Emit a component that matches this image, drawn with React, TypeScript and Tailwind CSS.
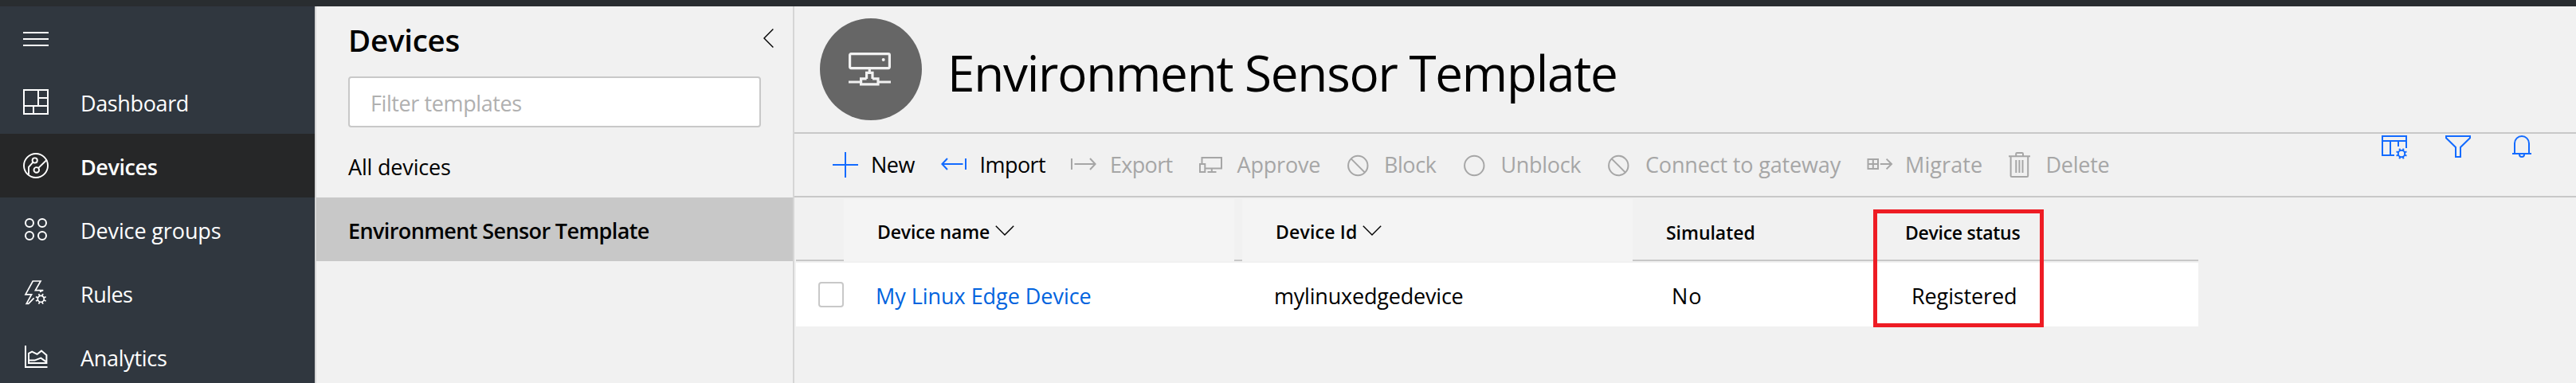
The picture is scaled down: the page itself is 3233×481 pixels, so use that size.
import type { ReactNode, SVGProps } from "react";

type IconProps = { w?: number; h?: number; children: ReactNode } & SVGProps<SVGSVGElement>;

function Icon({ w = 32, h = 32, children, ...rest }: IconProps) {
  return (
    <svg
      width={w}
      height={h}
      viewBox={`0 0 ${w} ${h}`}
      fill="none"
      stroke="currentColor"
      strokeWidth={2}
      className="block shrink-0 overflow-visible"
      {...rest}
    >
      {children}
    </svg>
  );
}

function Gear({ cx, cy, r, outer }: { cx: number; cy: number; r: number; outer: number }) {
  return (
    <g transform={`translate(${cx} ${cy})`}>
      <circle r={r} />
      {[22.5, 67.5, 112.5, 157.5, 202.5, 247.5, 292.5, 337.5].map((a) => (
        <path key={a} d={`M${r} 0H${outer}`} transform={`rotate(${a})`} />
      ))}
    </g>
  );
}

const HamburgerIcon = () => (
  <Icon>
    <path d="M0 9H32M0 17H32M0 25H32" />
  </Icon>
);

const DashboardIcon = () => (
  <Icon>
    <path d="M1 1H31V31H1ZM19 1V21M1 21H31M19 11H31M13 21V31" />
  </Icon>
);

const DevicesIcon = () => (
  <Icon strokeWidth={1.9}>
    <circle cx="16" cy="16" r="15" />
    <circle cx="14.7" cy="9.5" r="3.1" />
    <path d="M12.3 11.8L7 17.8V27.5" />
    <circle cx="16.8" cy="21.4" r="3.3" />
    <path d="M19.3 18.9L30 8.5" />
  </Icon>
);

const GroupsIcon = () => (
  <Icon>
    <circle cx="8" cy="8" r="5" />
    <circle cx="24" cy="8" r="5" />
    <circle cx="8" cy="24" r="5" />
    <circle cx="24" cy="24" r="5" />
  </Icon>
);

const RulesIcon = () => (
  <Icon strokeWidth={1.7}>
    <path d="M21 14.6L25.2 12.6H15.4L22 1H12.2L3 17.8H10.6L4.2 29.3H6.8L13.6 22.4" />
    <Gear cx={22.3} cy={23.4} r={4} outer={6.9} />
  </Icon>
);

const AnalyticsIcon = () => (
  <Icon>
    <path d="M3 2V29H30.5" />
    <path d="M7 24V11.8L11.2 9.6L17.6 12.8L23 8.6L29.4 14V24Z" />
    <path d="M7 20.6H14.5L22.3 17.6L29 22.4" />
  </Icon>
);

const PlusIcon = () => (
  <Icon>
    <path d="M16 0V32M0 16H32" />
  </Icon>
);

const ImportIcon = () => (
  <Icon>
    <path d="M8 8L1.4 15L8 22M1.4 15H27.5M31 8V22" />
  </Icon>
);

const ExportIcon = () => (
  <Icon>
    <path d="M24 8L30.6 15L24 22M30.6 15H4.5M1 8V22" />
  </Icon>
);

const ApproveIcon = () => (
  <Icon w={29}>
    <path d="M3.5 14V7H28V20.5H8" />
    <path d="M1 15H7.3V25H1Z" />
    <path d="M15.8 21V25M10.5 25H21.5" />
  </Icon>
);

const BlockIcon = () => (
  <Icon w={27}>
    <circle cx="13.3" cy="17" r="12.2" />
    <path d="M4.7 8.4L21.9 25.6" />
  </Icon>
);

const UnblockIcon = () => (
  <Icon w={27}>
    <circle cx="13.3" cy="17" r="12.2" />
  </Icon>
);

const MigrateIcon = () => (
  <Icon>
    <path d="M1.5 9H14V21H1.5ZM7.8 9V21M1.5 15H14M16.8 15H31M24.6 8.6L31 15L24.6 21.4" />
  </Icon>
);

const DeleteIcon = () => (
  <Icon w={27}>
    <path d="M0 5.3H27M9.2 5V2.2Q9.2 1 10.4 1H16.8Q18 1 18 2.2V5" />
    <path d="M2.6 6V29.5Q2.6 31 4.1 31H22.7Q24.2 31 24.2 29.5V6M9.3 10V26M13.4 10V26M17.5 10V26" />
  </Icon>
);

const ColumnsIcon = () => (
  <Icon w={32} h={30}>
    <path d="M16 25H1V1H31V16M1 7H31M11 7V25M21 7V14" />
    <Gear cx={25} cy={23} r={4.2} outer={7} />
  </Icon>
);

const FilterIcon = () => (
  <Icon w={32} h={28}>
    <path d="M1 1H31V3.3L19 15V27H13V15L1 3.3Z" />
  </Icon>
);

const BellIcon = () => (
  <Icon w={24} h={28}>
    <path d="M0 23H24M3 23V10A9 9 0 0 1 21 10V23M9 24A3 3 0 0 0 15 24" />
  </Icon>
);

const ServerIcon = () => (
  <Icon w={53} h={42} strokeWidth={3.2}>
    <rect x="1.6" y="1.6" width="49.8" height="18" rx="1.5" />
    <circle cx="43.7" cy="9" r="2" fill="currentColor" stroke="none" />
    <path d="M26.3 20V25M22.6 33V25.4H30V33M22.6 32.8H15.6V39.8H37V32.8H30M0 37H15M37 37H53" />
  </Icon>
);

const ChevronDown = () => (
  <Icon w={24} h={13} strokeWidth={1.4}>
    <path d="M0.8 0.8L12 12L23.2 0.8" />
  </Icon>
);

const nav = [
  { label: "Dashboard", icon: <DashboardIcon />, style: "tracking-[-0.37px]" },
  { label: "Devices", icon: <DevicesIcon />, style: "bg-[#262728] font-semibold tracking-[-0.42px]" },
  { label: "Device groups", icon: <GroupsIcon />, style: "tracking-[-0.12px]" },
  { label: "Rules", icon: <RulesIcon />, style: "tracking-[-0.52px]" },
  { label: "Analytics", icon: <AnalyticsIcon />, style: "tracking-[-0.3px]" },
];

const commands = [
  { label: "New", icon: <PlusIcon />, cell: "w-[136px]", slot: "w-[48px]", text: "tracking-[-0.55px]", enabled: true },
  { label: "Import", icon: <ImportIcon />, cell: "w-[163px]", slot: "w-[48.5px]", text: "tracking-[-0.56px]", enabled: true },
  { label: "Export", icon: <ExportIcon />, cell: "w-[161px]", slot: "w-[49px]", text: "tracking-[-0.68px]" },
  { label: "Approve", icon: <ApproveIcon />, cell: "w-[185.5px]", slot: "w-[47.5px]", text: "tracking-[-0.17px]" },
  { label: "Block", icon: <BlockIcon />, cell: "w-[146.5px]", slot: "w-[46.5px]", text: "tracking-[-0.45px]" },
  { label: "Unblock", icon: <UnblockIcon />, cell: "w-[181px]", slot: "w-[46.5px]", text: "tracking-[-0.33px]" },
  { label: "Connect to gateway", icon: <BlockIcon />, cell: "w-[324.5px]", slot: "w-[47px]", text: "tracking-[-0.16px]" },
  { label: "Migrate", icon: <MigrateIcon />, cell: "w-[178.5px]", slot: "w-[48.5px]", text: "tracking-[0.1px]" },
  { label: "Delete", icon: <DeleteIcon />, cell: "w-[127px]", slot: "w-[46.5px]", text: "tracking-[-0.26px]" },
];

function Sidebar() {
  return (
    <nav className="w-[395px] shrink-0 bg-[#30373f] text-white">
      <div className="flex h-20 items-center pl-[29px]">
        <HamburgerIcon />
      </div>
      {nav.map((n) => (
        <div key={n.label} className={`flex h-20 items-center gap-10 pl-[29px] ${n.style}`}>
          {n.icon}
          <span className="pt-1">{n.label}</span>
        </div>
      ))}
    </nav>
  );
}

function TemplatePanel() {
  return (
    <aside className="w-[602px] shrink-0 border-x-2 border-[#d6d6d6] bg-[#f1f1f1]">
      <div className="flex h-[84px] items-center justify-between pr-6 pl-10">
        <h2 className="text-[38.5px] leading-[84px] font-semibold tracking-[-0.26px]">Devices</h2>
        <Icon w={13} h={24} strokeWidth={1.4} className="mb-[4px] block">
          <path d="M12.4 0.6L1 12L12.4 23.4" />
        </Icon>
      </div>
      <div className="mt-1 ml-10 flex h-16 w-[518px] items-center rounded-[4px] border-2 border-[#c8c8c8] bg-white pt-1 pl-[26px] tracking-[-0.4px] text-[#b0b0b0]">
        Filter templates
      </div>
      <div className="mt-2 flex h-20 items-center pt-1 pl-10 tracking-[-0.18px]">All devices</div>
      <div className="flex h-20 items-center bg-[#c8c8c8] pt-1 pl-10 font-semibold tracking-[-0.61px]">
        Environment Sensor Template
      </div>
    </aside>
  );
}

function Toolbar() {
  return (
    <div className="flex h-20 items-start border-b-2 border-[#c8c8c8] pr-14 pl-12">
      {commands.map((c) => (
        <div
          key={c.label}
          className={`flex h-[78px] items-center ${c.cell} ${c.enabled ? "text-black" : "text-[#a6a6a6]"}`}
        >
          <span className={`shrink-0 ${c.slot} ${c.enabled ? "text-[#136bff]" : ""}`}>{c.icon}</span>
          <span className={`whitespace-nowrap ${c.text}`}>{c.label}</span>
        </div>
      ))}
      <div className="ml-auto flex items-start pt-0.5 text-[#136bff]">
        <ColumnsIcon />
        <span className="ml-12">
          <FilterIcon />
        </span>
        <span className="ml-[52px]">
          <BellIcon />
        </span>
      </div>
    </div>
  );
}

function DeviceTable() {
  return (
    <div className="relative mt-0.5 ml-0.5 w-[1760px]">
      <div className="grid h-[78px] grid-cols-[60px_490px_10px_490px_300px_410px] text-[23px] font-semibold">
        <div className="border-b-2 border-[#c8c8c8]" />
        <div className="flex items-center gap-[7px] bg-[#f4f4f4] pl-[42px]">
          <span className="pt-[3px] tracking-[-0.14px]">Device name</span>
          <ChevronDown />
        </div>
        <div className="border-b-2 border-[#c8c8c8]" />
        <div className="flex items-center gap-[6px] bg-[#f4f4f4] pl-[42px]">
          <span className="pt-[3px] tracking-[0.2px]">Device Id</span>
          <ChevronDown />
        </div>
        <div className="flex items-center border-b-2 border-[#c8c8c8] pt-[7px] pl-[42px] tracking-[-0.04px]">
          Simulated
        </div>
        <div className="flex items-center border-b-2 border-[#c8c8c8] pt-[7px] pl-[42px] tracking-[-0.28px]">
          Device status
        </div>
      </div>
      <div className="mt-0.5 grid h-20 grid-cols-[60px_500px_490px_300px_410px] items-center bg-white">
        <span className="ml-7 block size-8 rounded-[4px] border-2 border-[#c8c8c8] bg-white" />
        <a className="pt-1 pl-10 tracking-[-0.04px] text-[#0063de]">My Linux Edge Device</a>
        <span className="pt-1 pl-10 tracking-[-0.2px]">mylinuxedgedevice</span>
        <span className="pt-1 pl-[49px] tracking-[0.8px]">No</span>
        <span className="pt-1 pl-[50px] tracking-[-0.12px]">Registered</span>
      </div>
      <div className="absolute top-[13px] left-[1352px] h-[148px] w-[214px] border-[5px] border-[#ee1c24]" />
    </div>
  );
}

export default function App() {
  return (
    <div className="flex h-screen flex-col overflow-hidden bg-[#f1f1f1] font-['Open_Sans','Noto_Sans',sans-serif] text-[27px] leading-[40px] text-black">
      <div className="h-2 shrink-0 bg-[#292d30]" />
      <div className="flex min-h-0 flex-1">
        <Sidebar />
        <TemplatePanel />
        <main className="min-w-0 flex-1">
          <header className="flex h-40 items-center gap-8 border-b-2 border-[#c8c8c8] pl-8">
            <div className="flex size-32 items-center justify-center rounded-full bg-[#666] pr-[3px] text-[#f1f1f1]">
              <ServerIcon />
            </div>
            <h1 className="pt-[7px] text-[62px] leading-[90px] tracking-[-1.26px]">Environment Sensor Template</h1>
          </header>
          <Toolbar />
          <DeviceTable />
        </main>
      </div>
    </div>
  );
}
